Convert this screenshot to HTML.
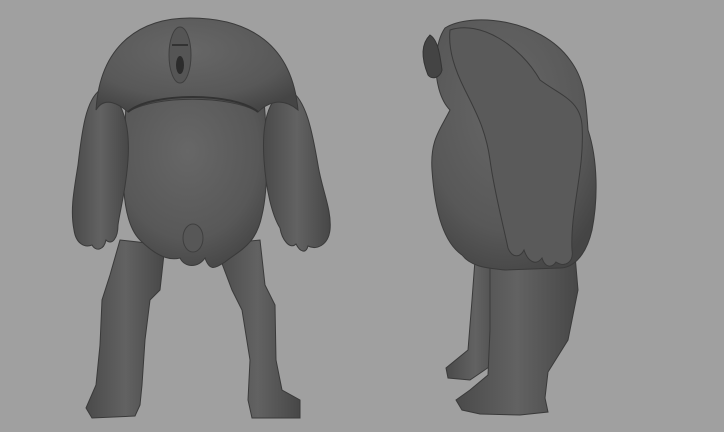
<!DOCTYPE html>
<html><head><style>
html,body{margin:0;padding:0;background:#a0a0a0;width:724px;height:432px;overflow:hidden}
svg{display:block}
</style></head><body>
<svg width="724" height="432" viewBox="0 0 724 432" xmlns="http://www.w3.org/2000/svg">
<defs>
<radialGradient id="g1" cx="0.45" cy="0.35" r="0.7">
<stop offset="0" stop-color="#676767"/><stop offset="0.7" stop-color="#585858"/><stop offset="1" stop-color="#454545"/>
</radialGradient>
<linearGradient id="g2" x1="0" x2="1">
<stop offset="0" stop-color="#4a4a4a"/><stop offset="0.5" stop-color="#626262"/><stop offset="1" stop-color="#474747"/>
</linearGradient>
</defs>
<rect width="724" height="432" fill="#a0a0a0"/>
<g fill="url(#g2)" stroke="#3a3a3a" stroke-width="1">
<path d="M120 240 L165 245 L160 290 L150 300 L145 340 L142 385 L140 405 L135 416 L92 418 L86 408 L96 385 L100 345 L102 300 L110 275 Z"/>
<path d="M215 245 L260 240 L265 285 L275 305 L276 360 L282 390 L300 400 L300 418 L252 418 L248 400 L250 360 L242 310 L232 290 Z"/>
</g>
<!-- torso -->
<path fill="url(#g1)" stroke="#3a3a3a" d="M126 100 C160 85 230 85 264 100 C268 150 268 190 262 215 C256 245 240 250 225 262 C215 268 210 272 205 258 C198 268 185 268 180 258 C165 262 150 250 140 240 C125 225 122 190 124 160 Z"/>
<ellipse cx="193" cy="238" rx="10" ry="14" fill="#575757" stroke="#3f3f3f"/>
<!-- arms -->
<path fill="url(#g2)" stroke="#3a3a3a" d="M100 90 C125 95 130 130 128 160 C126 190 120 210 118 225 C118 238 112 246 106 240 C104 250 96 252 92 245 C85 248 76 244 74 230 C70 210 74 190 78 165 C82 130 86 100 100 90 Z"/>
<path fill="url(#g2)" stroke="#3a3a3a" d="M290 90 C265 95 262 130 264 160 C266 190 272 215 280 228 C282 240 290 250 296 244 C300 252 306 254 308 246 C316 250 328 246 330 230 C332 210 322 190 318 165 C312 130 306 100 290 90 Z"/>
<!-- hump -->
<path fill="url(#g1)" stroke="#3a3a3a" d="M190 18 C250 18 292 45 298 110 C280 95 265 105 258 112 C230 95 155 95 128 112 C120 105 105 95 96 110 C100 45 140 18 190 18 Z"/>
<path d="M128 112 C150 92 235 92 258 112" fill="none" stroke="#333" stroke-width="2"/>
<ellipse cx="180" cy="55" rx="11" ry="28" fill="#555" stroke="#3f3f3f"/>
<ellipse cx="180" cy="65" rx="4" ry="9" fill="#2c2c2c"/>
<path d="M172 45 L188 45" stroke="#333" stroke-width="2"/>
<!-- SIDE FIGURE -->
<g fill="url(#g2)" stroke="#3a3a3a">
<path d="M475 260 L505 265 L500 330 L492 365 L470 380 L448 378 L446 368 L468 350 L472 300 Z"/>
<path d="M490 265 L575 255 L578 290 L568 340 L548 372 L545 398 L548 412 L520 415 L480 414 L462 410 L456 400 L470 390 L488 375 L490 330 Z"/>
</g>
<path fill="url(#g1)" stroke="#3a3a3a" d="M445 28 C470 12 540 18 570 60 C585 80 586 100 588 130 C598 160 598 200 592 230 C585 260 570 268 560 268 L505 270 C490 268 472 268 462 255 C440 240 434 200 432 170 C430 140 440 130 450 110 C440 100 435 80 436 60 C437 45 440 35 445 28 Z"/>
<path fill="#5a5a5a" stroke="#3a3a3a" d="M450 30 C480 20 520 45 540 80 C560 95 580 100 582 125 C585 170 570 210 572 250 C574 262 565 268 556 262 C552 268 545 268 542 258 C536 266 528 262 524 250 C520 258 512 258 508 248 C502 220 494 190 490 160 C486 130 475 110 465 90 C455 70 448 50 450 30 Z"/>
<path d="M430 35 C420 45 422 60 428 75 C432 80 440 78 442 70 C440 55 438 40 430 35 Z" fill="#444" stroke="#333"/>
</svg>
</body></html>
